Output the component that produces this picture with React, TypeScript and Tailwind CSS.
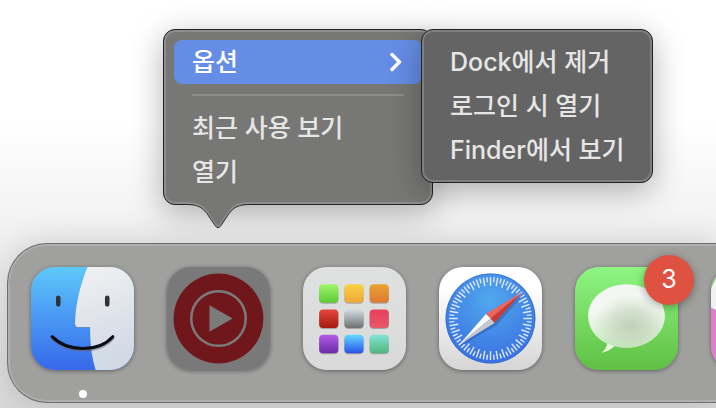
import React from "react";

const TILE_COLORS = [
  ["#a0f56a", "#5ccb35"],
  ["#f8d341", "#eda63a"],
  ["#eba22f", "#dc7a35"],
  ["#e5483b", "#a5180f"],
  ["#d5dde2", "#6c7070"],
  ["#e83f5b", "#e6586a"],
  ["#b45de5", "#6a2aa8"],
  ["#65d8ff", "#2851e6"],
  ["#83e4d8", "#50b67a"],
];

const TICKS = Array.from({ length: 72 }, (_, i) => i * 5);

const FinderIcon = () => (
  <svg viewBox="0 0 102 102" className="size-full">
    <defs>
      <linearGradient id="finder-blue" x1="0" y1="0" x2="0" y2="1">
        <stop offset="0" stopColor="#5fc8f8" />
        <stop offset="0.45" stopColor="#4b9df5" />
        <stop offset="1" stopColor="#3768ea" />
      </linearGradient>
      <linearGradient id="finder-white" x1="0" y1="0" x2="0.2" y2="1">
        <stop offset="0" stopColor="#f1f1f2" />
        <stop offset="1" stopColor="#d1d9e5" />
      </linearGradient>
    </defs>
    <rect width="102" height="102" fill="url(#finder-blue)" />
    <path
      d="M56 0C49 17 44 36 43.500 57C43.500 59 44 60 46 60H58.500C58.500 76 60 89 64 102H102V0Z"
      fill="url(#finder-white)"
    />
    <path
      d="M43.500 57C43.500 59 44 60 46 60H58.500"
      fill="none"
      stroke="#2f5f9f"
      strokeOpacity="0.5"
    />
    <path d="M27 30.500V37M75.500 30.500V37" stroke="#303336" strokeWidth="4.500" strokeLinecap="round" />
    <path d="M21 70.500C36 86 67 86 81 70.500" fill="none" stroke="#667" strokeOpacity="0.5" strokeWidth="3.500" strokeLinecap="round" />
    <path d="M21 69C36 84.500 67 84.500 81 69" fill="none" stroke="#0b0e14" strokeWidth="3" strokeLinecap="round" />
  </svg>
);

const MusicIcon = () => (
  <svg viewBox="0 0 102 102" className="size-full">
    <rect width="102" height="102" fill="#797979" />
    <circle cx="51" cy="51" r="44.500" fill="#70171b" />
    <circle cx="51" cy="51" r="27" fill="none" stroke="#7b7b7b" strokeWidth="2.500" />
    <path d="M42 38V64L65 51Z" fill="#7b7b7b" />
  </svg>
);

const LaunchpadIcon = () => (
  <svg viewBox="0 0 102 102" className="size-full">
    <defs>
      <linearGradient id="pad" x1="0" y1="0" x2="0" y2="1">
        <stop offset="0" stopColor="#dfe1e1" />
        <stop offset="1" stopColor="#d9d9d9" />
      </linearGradient>
      {TILE_COLORS.map(([from, to], i) => (
        <linearGradient key={from} id={`tile-${i}`} x1="0" y1="0" x2="0" y2="1">
          <stop offset="0" stopColor={from} />
          <stop offset="1" stopColor={to} />
        </linearGradient>
      ))}
    </defs>
    <rect width="102" height="102" fill="url(#pad)" />
    {TILE_COLORS.map(([from], i) => {
      const x = 16 + (i % 3) * 25;
      const y = 17 + Math.floor(i / 3) * 25;
      return (
        <g key={from}>
          <rect x={x} y={y + 1} width="19" height="18.500" rx="4" fill="#000" fillOpacity="0.25" />
          <rect x={x} y={y} width="19" height="18.500" rx="4" fill={`url(#tile-${i})`} />
        </g>
      );
    })}
  </svg>
);

const SafariIcon = () => (
  <svg viewBox="0 0 102 102" className="size-full">
    <defs>
      <linearGradient id="safari-base" x1="0" y1="0" x2="0" y2="1">
        <stop offset="0.2" stopColor="#ffffff" />
        <stop offset="1" stopColor="#d6d6d6" />
      </linearGradient>
      <radialGradient id="safari-dial" cx="0.5" cy="0.3" r="0.7">
        <stop offset="0" stopColor="#51a8ee" />
        <stop offset="1" stopColor="#3a70e2" />
      </radialGradient>
    </defs>
    <rect width="102" height="102" fill="url(#safari-base)" />
    <circle cx="51" cy="51" r="44.500" fill="url(#safari-dial)" />
    <circle cx="51" cy="51" r="44" fill="none" stroke="#2f67b8" strokeOpacity="0.5" />
    {TICKS.map((angle, i) => (
      <path
        key={angle}
        d={i % 2 ? "M51 10V15" : "M51 10V18.500"}
        stroke="#dcebfb"
        strokeWidth="1.400"
        transform={`rotate(${angle} 51 51)`}
      />
    ))}
    <path d="M84 27L57 58L20 79Z" fill="#1e4b9a" fillOpacity="0.4" />
    <path d="M83 24.500L46.500 46.500L51 51Z" fill="#ee6459" />
    <path d="M83 24.500L55 55.500L51 51Z" fill="#c93c34" />
    <path d="M20 77L46.500 46.500L51 51Z" fill="#fbfbfb" />
    <path d="M20 77L55 55.500L51 51Z" fill="#c6c8cc" />
  </svg>
);

const MessagesIcon = () => (
  <svg viewBox="0 0 102 102" className="size-full">
    <defs>
      <linearGradient id="messages-green" x1="0" y1="0" x2="0" y2="1">
        <stop offset="0" stopColor="#8ef582" />
        <stop offset="1" stopColor="#5fc043" />
      </linearGradient>
      <linearGradient id="bubble" x1="0" y1="0" x2="0" y2="1">
        <stop offset="0" stopColor="#f2f5f1" />
        <stop offset="0.35" stopColor="#f6f8f5" />
        <stop offset="0.7" stopColor="#dff1da" />
        <stop offset="1" stopColor="#b6eaa7" />
      </linearGradient>
      <radialGradient id="bubble-shade" cx="0.56" cy="0.66" r="0.5">
        <stop offset="0" stopColor="#bfd0b8" />
        <stop offset="0.5" stopColor="#c6d8c0" stopOpacity="0.7" />
        <stop offset="1" stopColor="#c5dfbd" stopOpacity="0" />
      </radialGradient>
    </defs>
    <rect width="102" height="102" fill="url(#messages-green)" />
    <path
      d="M51 17C72 17 89 31 89 48.500S72 80 51 80C47 80 43 79.500 39 78.500C35 82 31 84 26.500 85C30 82 31.500 79 32 76C20 70.500 13 60 13 48.500C13 31 30 17 51 17Z"
      fill="url(#bubble)"
    />
    <ellipse cx="51" cy="48.500" rx="38" ry="31.500" fill="url(#bubble-shade)" />
    <path d="M39 78.500C35 82 31 84 26.500 85C30 82 31.500 79 32 76Z" fill="#e7f8e3" />
  </svg>
);

const PhotoIcon = () => (
  <svg viewBox="0 0 102 102" className="size-full">
    <rect width="102" height="102" fill="#df7fcb" />
    <path d="M0 0H40V60L0 40Z" fill="#f1f1f1" />
    <path d="M0 21L10 0H0Z" fill="#62c749" />
  </svg>
);

interface DockApp {
  name: string;
  icon: React.ReactNode;
  running?: boolean;
  badge?: number;
}

const DOCK_APPS: DockApp[] = [
  { name: "Finder", icon: <FinderIcon />, running: true },
  { name: "YouTube Music", icon: <MusicIcon /> },
  { name: "Launchpad", icon: <LaunchpadIcon /> },
  { name: "Safari", icon: <SafariIcon /> },
  { name: "Messages", icon: <MessagesIcon />, badge: 3 },
  { name: "Photos", icon: <PhotoIcon /> },
];

const DockItem: React.FC<{ app: DockApp }> = ({ app }) => (
  <li className="relative flex shrink-0 flex-col items-center gap-5">
    <button type="button" aria-label={app.name} className="block size-[103px]">
      <span className="block size-full overflow-hidden rounded-3xl shadow-[0_1px_4px_rgba(0,0,0,0.4)]">
        {app.icon}
      </span>
    </button>
    {app.running && <span className="size-2 rounded-full bg-white" />}
    {app.badge && (
      <span className="absolute -top-3 -right-4 flex size-[50px] items-center justify-center rounded-full bg-[#df5140] text-[25px] font-normal text-white shadow-[0_2px_8px_rgba(0,0,0,0.35)]">
        {app.badge}
      </span>
    )}
  </li>
);

const MenuItem: React.FC<{ label: string; selected?: boolean }> = ({
  label,
  selected = false,
}) => (
  <li role="none">
    <button
      type="button"
      role="menuitem"
      className={`flex h-11 w-full items-center justify-between rounded-lg pt-0.5 pr-5 pl-[18px] text-left whitespace-nowrap ${
        selected ? "bg-[#658de6] text-white" : "text-[#e6e6e6]"
      }`}
    >
      {label}
      {selected && (
        <svg viewBox="0 0 12 20" className="h-5 w-3" fill="none" stroke="currentColor">
          <path d="M2 1.500L9.500 9L2 16.500" strokeWidth="3.500" strokeLinecap="round" strokeLinejoin="round" />
        </svg>
      )}
    </button>
  </li>
);

export default function App() {
  return (
    <main className="min-h-screen overflow-hidden bg-linear-to-b from-white from-30% via-[#f2f2f2] via-55% to-[#d8d8d8] pt-[29px] font-['Inter','Noto_Sans_CJK_KR',sans-serif] text-[25px] font-medium">
      {/* Context menu */}
      <div className="flex items-start pl-[163px]">
        <div className="relative w-[270px] shrink-0 rounded-xl border border-[#222] bg-[#777775] p-2.5 shadow-[inset_0_0_0_2px_#8e8e8d,0_8px_32px_rgba(0,0,0,0.3)]">
          <ul role="menu">
            <MenuItem label="옵션" selected />
            <li role="separator" className="mx-[18px] my-2.5 h-0.5 bg-[#8b8b8a]" />
            <MenuItem label="최근 사용 보기" />
            <MenuItem label="열기" />
          </ul>
          <svg
            viewBox="0 0 64 28"
            className="absolute top-full left-[22px] -mt-0.5 h-7 w-16"
            fill="none"
          >
            <path d="M0 0H64V2C52 2 48 5 43 11L35 23.500Q32 27.500 29 23.500L21 11C16 5 12 2 0 2Z" fill="#777776" />
            <path d="M0 1C12 1 16 4 21 10L29 22Q32 26 35 22L43 10C48 4 52 1 64 1" stroke="#8e8e8d" strokeWidth="2" />
            <path d="M0 2.500C12 2.500 16 5.500 21 11.500L29 23.500Q32 28 35 23.500L43 11.500C48 5.500 52 2.500 64 2.500" stroke="#333" />
          </svg>
        </div>

        {/* Options submenu */}
        <ul
          role="menu"
          className="z-10 -ml-3 w-[232px] shrink-0 rounded-xl border border-[#222] bg-[#646464] p-2.5 shadow-[inset_0_0_0_2px_#7f7f7f,0_8px_32px_rgba(0,0,0,0.3)]"
        >
          <MenuItem label="Dock에서 제거" />
          <MenuItem label="로그인 시 열기" />
          <MenuItem label="Finder에서 보기" />
        </ul>
      </div>

      {/* Dock */}
      <nav className="mt-[38px] ml-[7px] rounded-l-[40px] border border-r-0 border-[#6e6e6e] bg-[#a0a09f] pt-[23px] pb-1 pl-[23px] shadow-[inset_0_2px_0_#afafae,inset_2px_0_0_#afafae,inset_0_-2px_0_#afafae,0_0_32px_rgba(0,0,0,0.15)]">
        <ul className="flex gap-[33px]">
          {DOCK_APPS.map((app) => (
            <DockItem key={app.name} app={app} />
          ))}
        </ul>
      </nav>
    </main>
  );
}
